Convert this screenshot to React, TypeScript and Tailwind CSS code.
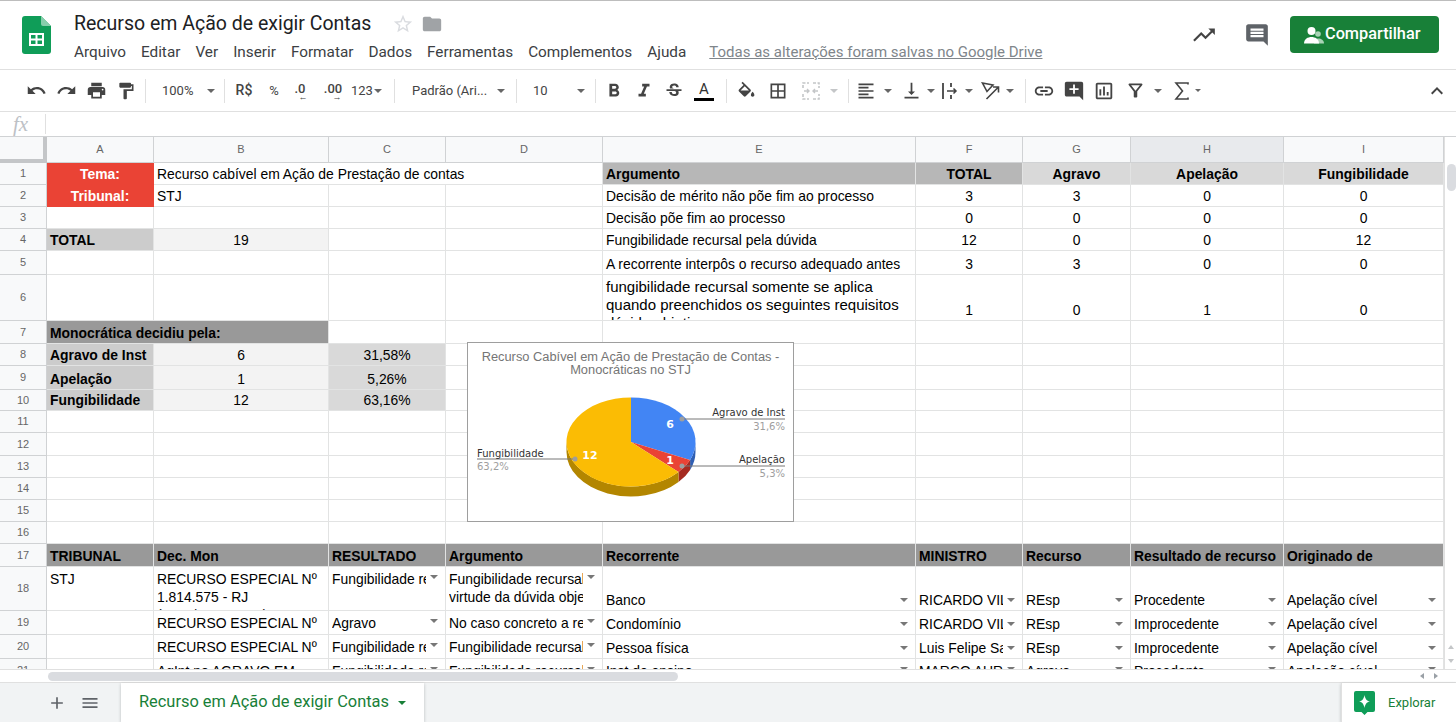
import React from 'react';
import {
  MdUndo,
  MdRedo,
  MdPrint,
  MdFormatPaint,
  MdFormatBold,
  MdFormatItalic,
  MdStrikethroughS,
  MdBorderAll,
  MdFormatAlignLeft,
  MdVerticalAlignBottom,
  MdInsertLink,
  MdAddComment,
  MdOutlineInsertChart,
  MdOutlineFilterAlt,
  MdExpandLess,
  MdTrendingUp,
  MdInsertComment,
  MdStarBorder,
  MdFolder,
  MdAdd,
  MdMenu,
} from 'react-icons/md';

const MENU = ['Arquivo', 'Editar', 'Ver', 'Inserir', 'Formatar', 'Dados', 'Ferramentas', 'Complementos', 'Ajuda'];
const COLS = ['A', 'B', 'C', 'D', 'E', 'F', 'G', 'H', 'I'];

interface CellData {
  t?: string;
  c?: string;
  drop?: boolean;
  top?: boolean;
  wrap?: boolean;
}

const center = 'justify-center text-center';
const bold = 'font-bold';
const head = 'bg-[#999999] font-bold border-[#999999]';
const empty: CellData = {};
const blanks = (n: number): CellData[] => Array.from({ length: n }, () => empty);
const nums = (a: string, b: string, c: string, d: string): CellData[] =>
  [a, b, c, d].map((t) => ({ t, c: center }));

const ROWS: CellData[][] = [
  [
    { t: 'Tema:', c: `${center} ${bold} bg-[#ea4335] text-white border-[#ea4335]` },
    { t: 'Recurso cabível em Ação de Prestação de contas', c: 'col-span-3' },
    { t: 'Argumento', c: 'bg-[#b7b7b7] font-bold' },
    { t: 'TOTAL', c: `${center} ${bold} bg-[#b7b7b7]` },
    { t: 'Agravo', c: `${center} ${bold} bg-[#d9d9d9]` },
    { t: 'Apelação', c: `${center} ${bold} bg-[#d9d9d9]` },
    { t: 'Fungibilidade', c: `${center} ${bold} bg-[#d9d9d9]` },
  ],
  [
    { t: 'Tribunal:', c: `${center} ${bold} bg-[#ea4335] text-white border-[#ea4335]` },
    { t: 'STJ' },
    ...blanks(2),
    { t: 'Decisão de mérito não põe fim ao processo' },
    ...nums('3', '3', '0', '0'),
  ],
  [...blanks(4), { t: 'Decisão põe fim ao processo' }, ...nums('0', '0', '0', '0')],
  [
    { t: 'TOTAL', c: 'bg-[#cccccc] font-bold' },
    { t: '19', c: `${center} bg-[#f3f3f3]` },
    ...blanks(2),
    { t: 'Fungibilidade recursal pela dúvida' },
    ...nums('12', '0', '0', '12'),
  ],
  [...blanks(4), { t: 'A recorrente interpôs o recurso adequado antes' }, ...nums('3', '3', '0', '0')],
  [
    ...blanks(4),
    {
      t: 'fungibilidade recursal somente se aplica quando preenchidos os seguintes requisitos dúvida objetiva',
      top: true,
      wrap: true,
      c: 'text-[15px]',
    },
    ...nums('1', '0', '1', '0'),
  ],
  [{ t: 'Monocrática decidiu pela:', c: `col-span-2 ${head}` }, ...blanks(7)],
  [
    { t: 'Agravo de Inst', c: 'bg-[#cccccc] font-bold' },
    { t: '6', c: `${center} bg-[#f3f3f3]` },
    { t: '31,58%', c: `${center} bg-[#d9d9d9]` },
    ...blanks(6),
  ],
  [
    { t: 'Apelação', c: 'bg-[#cccccc] font-bold' },
    { t: '1', c: `${center} bg-[#f3f3f3]` },
    { t: '5,26%', c: `${center} bg-[#d9d9d9]` },
    ...blanks(6),
  ],
  [
    { t: 'Fungibilidade', c: 'bg-[#cccccc] font-bold' },
    { t: '12', c: `${center} bg-[#f3f3f3]` },
    { t: '63,16%', c: `${center} bg-[#d9d9d9]` },
    ...blanks(6),
  ],
  blanks(9),
  blanks(9),
  blanks(9),
  blanks(9),
  blanks(9),
  blanks(9),
  ['TRIBUNAL', 'Dec. Mon', 'RESULTADO', 'Argumento', 'Recorrente', 'MINISTRO', 'Recurso', 'Resultado de recurso', 'Originado de'].map(
    (t) => ({ t, c: head }),
  ),
  [
    { t: 'STJ', top: true },
    { t: 'RECURSO ESPECIAL Nº 1.814.575 - RJ (2019/0138420-5)', top: true, wrap: true },
    { t: 'Fungibilidade recursal', top: true, drop: true },
    { t: 'Fungibilidade recursal em\nvirtude da dúvida objetiva', top: true, drop: true },
    { t: 'Banco', drop: true },
    { t: 'RICARDO VILLAS', drop: true },
    { t: 'REsp', drop: true },
    { t: 'Procedente', drop: true },
    { t: 'Apelação cível', drop: true },
  ],
  [
    empty,
    { t: 'RECURSO ESPECIAL Nº 1.606.575 - SP', top: true, wrap: true },
    { t: 'Agravo', top: true, drop: true },
    { t: 'No caso concreto a recorrente\ninterpôs o recurso adequado', top: true, drop: true },
    { t: 'Condomínio', drop: true },
    { t: 'RICARDO VILLAS', drop: true },
    { t: 'REsp', drop: true },
    { t: 'Improcedente', drop: true },
    { t: 'Apelação cível', drop: true },
  ],
  [
    empty,
    { t: 'RECURSO ESPECIAL Nº 1.616.205 - RS', top: true, wrap: true },
    { t: 'Fungibilidade recursal', top: true, drop: true },
    { t: 'Fungibilidade recursal em\nvirtude da dúvida objetiva', top: true, drop: true },
    { t: 'Pessoa física', drop: true },
    { t: 'Luis Felipe Salomão', drop: true },
    { t: 'REsp', drop: true },
    { t: 'Improcedente', drop: true },
    { t: 'Apelação cível', drop: true },
  ],
  [
    empty,
    { t: 'AgInt no AGRAVO EM', top: true },
    { t: 'Fungibilidade recursal', top: true, drop: true },
    { t: 'Fungibilidade recursal em', top: true, drop: true },
    { t: 'Inst de ensino', top: true, drop: true },
    { t: 'MARCO AURÉLIO', top: true, drop: true },
    { t: 'Agravo', top: true, drop: true },
    { t: 'Procedente', top: true, drop: true },
    { t: 'Apelação cível', top: true, drop: true },
  ],
];

function Caret({ className = 'border-t-[#666666]' }: { className?: string }) {
  return <span className={`inline-block h-0 w-0 shrink-0 border-x-[4px] border-t-[4px] border-x-transparent ${className}`} />;
}

function Sep() {
  return <div className="h-[24px] w-px shrink-0 bg-[#e0e0e0]" />;
}

function SheetsLogo() {
  return (
    <svg width="29" height="38" viewBox="0 0 29 38">
      <path d="M3 0H19L29 10V35a3 3 0 0 1-3 3H3a3 3 0 0 1-3-3V3a3 3 0 0 1 3-3z" fill="#0f9d58" />
      <path d="M19 0L29 10H21a2 2 0 0 1-2-2z" fill="#87ceac" />
      <path d="M7 17H22V30H7zM9 19V22.5H13.5V19zM15.5 19V22.5H20V19zM9 24.5V28H13.5V24.5zM15.5 24.5V28H20V24.5z" fill="#fff" fillRule="evenodd" />
    </svg>
  );
}

function FillIcon() {
  return (
    <svg width="21" height="21" viewBox="0 0 24 20" fill="#444">
      <path d="M16.56 8.94L7.62 0 6.21 1.41l2.38 2.38-5.15 5.15c-.59.59-.59 1.54 0 2.12l5.5 5.5c.29.29.68.44 1.06.44s.77-.15 1.06-.44l5.5-5.5c.59-.58.59-1.53 0-2.11zM5.21 10L10 5.21 14.79 10H5.21zM19 11.5s-2 2.17-2 3.5c0 1.1.9 2 2 2s2-.9 2-2c0-1.33-2-3.5-2-3.5z" />
    </svg>
  );
}

function MergeIcon() {
  return (
    <svg width="18" height="18" viewBox="0 0 18 18" fill="none" stroke="#c4c6c8" strokeWidth="1.6">
      <path d="M1 6V1H7M11 1H17V6M1 12V17H7M11 17H17V12" strokeDasharray="3 1.5" />
      <path d="M2 9H7M5 7L7 9 5 11M16 9H11M13 7L11 9 13 11" strokeWidth="1.4" />
    </svg>
  );
}

function WrapIcon() {
  return (
    <svg width="18" height="20" viewBox="0 0 18 20" fill="none" stroke="#444" strokeWidth="1.8">
      <path d="M2 2V18" />
      <path d="M10 2V6M10 14V18" />
      <path d="M6 10H15M12.5 7.5L15 10 12.5 12.5" strokeWidth="1.5" />
    </svg>
  );
}

function RotateIcon() {
  return (
    <svg width="20" height="20" viewBox="0 0 20 20" fill="none" stroke="#444" strokeWidth="1.6">
      <path d="M1.5 2L12 4 6 10.5Z" />
      <path d="M5.5 18L17 6.5M12 6H17.5V11.5" />
    </svg>
  );
}

function SigmaIcon() {
  return (
    <svg width="18" height="20" viewBox="0 0 18 20" fill="none" stroke="#444" strokeWidth="1.6">
      <path d="M15 3.5V2H3L9.5 10 3 18H15V16.5" />
    </svg>
  );
}

function ShareIcon() {
  return (
    <svg width="22" height="20" viewBox="0 0 22 20" fill="#fff">
      <circle cx="15" cy="9" r="2.8" fill="#a9d3b6" />
      <path d="M11 18.5C11 15 13 13.5 15.5 13.5S21 15 21 18.5z" fill="#a9d3b6" />
      <circle cx="8.5" cy="6" r="4" />
      <path d="M1 18.5C1 14 5 12 8.5 12S16 14 16 18.5z" />
    </svg>
  );
}

function ExploreIcon() {
  return (
    <svg width="21" height="24" viewBox="0 0 21 24">
      <path d="M2 0H19a2 2 0 0 1 2 2V19a2 2 0 0 1-2 2H13.5L10.5 24 7.5 21H2a2 2 0 0 1-2-2V2A2 2 0 0 1 2 0z" fill="#0f9d58" />
      <path d="M10.5 4C11.3 8 12.5 9.7 16 10.5 12.5 11.3 11.3 13 10.5 17 9.7 13 8.5 11.3 5 10.5 8.5 9.7 9.7 8 10.5 4z" fill="#fff" />
    </svg>
  );
}

function Btn({ children, className = 'w-[30px]' }: { children: React.ReactNode; className?: string }) {
  return <div className={`flex h-[30px] shrink-0 items-center justify-center text-[#444444] ${className}`}>{children}</div>;
}

function Toolbar() {
  return (
    <div className="flex h-[43px] items-center border-y border-[#e0e0e0] pl-[21px] font-['Roboto',sans-serif] text-[13px] text-[#444444]">
      <Btn><MdUndo size={21} /></Btn>
      <Btn><MdRedo size={21} /></Btn>
      <Btn><MdPrint size={21} /></Btn>
      <Btn><MdFormatPaint size={20} /></Btn>
      <div className="ml-[4px]"><Sep /></div>
      <div className="flex w-[78px] shrink-0 items-center pl-[16px]">
        <span className="w-[45px]">100%</span>
        <Caret />
      </div>
      <Sep />
      <div className="flex w-[38px] justify-center text-[14px] font-medium">R$</div>
      <div className="flex w-[22px] justify-center">%</div>
      <div className="flex w-[30px] flex-col items-center leading-[13px]">
        <span className="font-medium">.0</span>
        <span className="-mt-[1px] pl-[6px] text-[9px] leading-[6px]">←</span>
      </div>
      <div className="flex w-[36px] flex-col items-center leading-[13px]">
        <span className="font-medium">.00</span>
        <span className="-mt-[1px] pl-[8px] text-[9px] leading-[6px]">→</span>
      </div>
      <div className="flex w-[43px] shrink-0 items-center gap-[1px]">
        <span>123</span>
        <Caret />
      </div>
      <Sep />
      <div className="flex w-[121px] shrink-0 items-center pl-[17px]">
        <span className="w-[85px]">Padrão (Ari...</span>
        <Caret />
      </div>
      <Sep />
      <div className="flex w-[78px] shrink-0 items-center pl-[16px]">
        <span className="w-[44px]">10</span>
        <Caret />
      </div>
      <Sep />
      <div className="ml-[3px] flex">
        <Btn><MdFormatBold size={22} /></Btn>
        <Btn><MdFormatItalic size={22} /></Btn>
        <Btn><MdStrikethroughS size={20} /></Btn>
        <div className="flex h-[30px] w-[30px] flex-col items-center justify-center text-[15px] leading-[18px] text-[#333333]">
          <span>A</span>
          <div className="h-[3px] w-[20px] bg-black" />
        </div>
      </div>
      <div className="ml-[7px]"><Sep /></div>
      <Btn className="ml-[4px] w-[30px]"><FillIcon /></Btn>
      <Btn className="ml-[2px] w-[30px]"><MdBorderAll size={20} /></Btn>
      <Btn className="ml-[3px] w-[30px]"><MergeIcon /></Btn>
      <Btn className="w-[16px]"><Caret className="border-t-[#c4c6c8]" /></Btn>
      <div className="ml-[6px]"><Sep /></div>
      <Btn className="ml-[5px] w-[24px]"><MdFormatAlignLeft size={20} /></Btn>
      <Btn className="ml-[3px] w-[14px]"><Caret /></Btn>
      <Btn className="ml-[4px] w-[24px]"><MdVerticalAlignBottom size={21} /></Btn>
      <Btn className="ml-[1px] w-[14px]"><Caret /></Btn>
      <Btn className="w-[24px]"><WrapIcon /></Btn>
      <Btn className="w-[14px]"><Caret /></Btn>
      <Btn className="ml-[1px] w-[28px]"><RotateIcon /></Btn>
      <Btn className="w-[10px]"><Caret /></Btn>
      <div className="ml-[10px]"><Sep /></div>
      <Btn className="ml-[3px] w-[30px]"><MdInsertLink size={22} /></Btn>
      <Btn className="w-[30px]"><MdAddComment size={22} /></Btn>
      <Btn className="w-[30px]"><MdOutlineInsertChart size={22} /></Btn>
      <Btn className="ml-[1px] w-[30px]"><MdOutlineFilterAlt size={21} /></Btn>
      <Btn className="w-[16px]"><Caret /></Btn>
      <Btn className="ml-[1px] w-[30px]"><SigmaIcon /></Btn>
      <Btn className="-ml-[3px] w-[8px]"><span className="h-0 w-0 border-x-[3px] border-t-[3px] border-x-transparent border-t-[#666666]" /></Btn>
      <div className="ml-auto mr-[4px]"><Btn><MdExpandLess size={24} /></Btn></div>
    </div>
  );
}

function Cell({ cell }: { cell: CellData }) {
  const align = cell.top ? 'items-start pt-[3px]' : 'items-end pb-[1px]';
  return (
    <div className={`flex min-h-0 min-w-0 overflow-hidden border-r border-b border-[#e2e3e3] px-[3px] text-[13.9px] leading-[18px] text-black ${align} ${cell.c ?? ''}`}>
      {cell.t && (
        <span className={`min-w-0 ${cell.drop ? 'flex-1 overflow-hidden' : ''} ${cell.wrap ? '' : 'whitespace-pre'}`}>
          {cell.t}
        </span>
      )}
      {cell.drop && (
        <span className={`ml-[4px] mr-[4px] shrink-0 ${cell.top ? 'mt-[5px]' : 'mb-[7px]'} flex`}>
          <Caret className="border-t-[#777777]" />
        </span>
      )}
    </div>
  );
}

function Sheet() {
  return (
    <div className="relative h-[532px] w-[1444px] shrink-0 overflow-hidden">
      <div className="grid grid-cols-[47px_107px_175px_117px_157px_313px_107px_108px_153px_160px] grid-rows-[26px_22px_22px_22px_22px_24px_46px_23px_22px_24px_21px_22px_23px_22px_22px_22px_22px_23px_44px_24px_24px_24px] font-['Liberation_Sans',Arial,sans-serif]">
        <div className="border-r-[4px] border-b-[4px] border-[#c4c6c8] bg-[#f8f9fa]" />
        {COLS.map((col) => (
          <div
            key={col}
            className={`flex items-center justify-center border-r border-b border-[#d0d2d4] text-[11px] text-[#666666] ${col === 'H' ? 'bg-[#e8eaed]' : 'bg-[#f8f9fa]'}`}
          >
            {col}
          </div>
        ))}
        {ROWS.map((row, i) => (
          <React.Fragment key={i}>
            <div className="flex items-center justify-center border-r border-b border-[#d0d2d4] bg-[#f8f9fa] text-[11px] text-[#666666]">
              {i + 1}
            </div>
            {row.map((cell, j) => (
              <Cell key={j} cell={cell} />
            ))}
          </React.Fragment>
        ))}
      </div>
      <PieChart />
    </div>
  );
}

// ponto na elipse do topo da pizza, angulo em graus a partir do topo
const CX = 163;
const CY = 99;
const RX = 64.5;
const RY = 44.5;
const DEPTH = 10;
const pt = (a: number, dy = 0) => {
  const r = (a * Math.PI) / 180;
  return `${(CX + RX * Math.sin(r)).toFixed(1)} ${(CY - RY * Math.cos(r) + dy).toFixed(1)}`;
};
const slice = (a: number, b: number) =>
  `M${CX} ${CY}L${pt(a)}A${RX} ${RY} 0 ${b - a > 180 ? 1 : 0} 1 ${pt(b)}Z`;
const side = (a: number, b: number) =>
  `M${pt(a)}A${RX} ${RY} 0 0 1 ${pt(b)}L${pt(b, DEPTH)}A${RX} ${RY} 0 0 0 ${pt(a, DEPTH)}Z`;

function PieChart() {
  return (
    <div className="absolute left-[467px] top-[205px] h-[180px] w-[327px] border border-[#9e9e9e] bg-white">
      <div className="pt-[7px] text-center font-['Liberation_Sans',Arial,sans-serif] text-[12.85px] leading-[13px] text-[#757575]">
        <p>Recurso Cabível em Ação de Prestação de Contas -</p>
        <p>Monocráticas no STJ</p>
      </div>
      <svg className="absolute left-0 top-0" width="325" height="178" viewBox="0 0 325 178" fontFamily="'DejaVu Sans', sans-serif" fontSize="10">
        <path d={side(90, 113.7)} fill="#2f5fb3" />
        <path d={side(113.7, 132.6)} fill="#a52a20" />
        <path d={side(132.6, 270)} fill="#b38600" />
        <path d={slice(0, 113.7)} fill="#4285f4" />
        <path d={slice(113.7, 132.6)} fill="#ea4335" />
        <path d={slice(132.6, 360)} fill="#fbbc04" />
        <g stroke="#777777" strokeWidth="1">
          <path d="M214 76H317" />
          <path d="M214 123H317" />
          <path d="M9 116H107" />
        </g>
        <g fill="#9e9e9e">
          <circle cx="214" cy="76" r="2.5" />
          <circle cx="214" cy="123" r="2.5" />
          <circle cx="107" cy="116" r="2.5" />
        </g>
        <g fill="#333333">
          <text x="317" y="73" textAnchor="end">Agravo de Inst</text>
          <text x="317" y="120" textAnchor="end">Apelação</text>
          <text x="9" y="114">Fungibilidade</text>
        </g>
        <g fill="#9e9e9e">
          <text x="317" y="87" textAnchor="end">31,6%</text>
          <text x="317" y="134" textAnchor="end">5,3%</text>
          <text x="9" y="127">63,2%</text>
        </g>
        <g fill="#ffffff" fontWeight="700" fontSize="11" textAnchor="middle">
          <text x="202" y="85">6</text>
          <text x="202" y="121">1</text>
          <text x="122" y="116">12</text>
        </g>
      </svg>
    </div>
  );
}

function VerticalScroll() {
  return (
    <div className="flex flex-1 flex-col border-l border-[#e0e0e0] pt-[27px]">
      <div className="ml-[2px] h-[27px] w-[9px] rounded-[5px] bg-[#dadce0]" />
      <div className="mt-auto mb-[6px] flex flex-col items-center gap-[10px]">
        <span className="h-0 w-0 border-x-[3px] border-b-[4px] border-x-transparent border-b-[#c4c6c8]" />
        <span className="h-0 w-0 border-x-[3px] border-t-[4px] border-x-transparent border-t-[#c4c6c8]" />
      </div>
    </div>
  );
}

export default function App() {
  return (
    <div className="flex h-[722px] w-[1456px] flex-col overflow-hidden bg-white font-['Roboto',sans-serif]">
      <header className="flex h-[69px] items-start border-t border-[#bdbdbd] pl-[22px]">
        <div className="mt-[15px]"><SheetsLogo /></div>
        <div className="ml-[23px] flex flex-col pt-[9px]">
          <div className="flex h-[28px] items-center">
            <h1 className="text-[19.5px] font-normal leading-[28px] text-[#202124]">Recurso em Ação de exigir Contas</h1>
            <MdStarBorder size={22} className="ml-[21px] text-[#dadce0]" />
            <MdFolder size={22} className="ml-[7px] text-[#a0a3a6]" />
          </div>
          <nav className="mt-[4px] flex items-center gap-[15px] text-[15.32px] leading-[20px] text-[#3c4043]">
            {MENU.map((m) => (
              <span key={m}>{m}</span>
            ))}
            <span className="ml-[8px] text-[15px] text-[#80868b] underline">Todas as alterações foram salvas no Google Drive</span>
          </nav>
        </div>
        <div className="ml-auto mr-[17px] mt-[15px] flex items-center">
          <MdTrendingUp size={26} className="text-[#444444]" />
          <MdInsertComment size={26} className="ml-[27px] text-[#5f6368]" />
          <button className="ml-[20px] flex h-[37px] w-[149px] items-center rounded-[4px] bg-[#188038] pl-[13px] text-[16.3px] font-medium text-white">
            <ShareIcon />
            Compartilhar
          </button>
        </div>
      </header>
      <Toolbar />
      <div className="flex h-[25px] items-center border-b border-[#d0d2d4]">
        <span className="ml-[13px] font-['Liberation_Serif',serif] text-[21px] italic leading-[24px] text-[#bdc1c6]">fx</span>
        <div className="ml-[17px] h-[20px] w-px bg-[#e0e0e0]" />
      </div>
      <div className="flex h-[532px]">
        <Sheet />
        <VerticalScroll />
      </div>
      <div className="flex h-[13px] items-center border-t border-[#e0e0e0] pl-[48px]">
        <div className="h-[9px] w-[630px] rounded-[5px] bg-[#dadce0]" />
        <div className="ml-auto mr-[18px] flex gap-[10px]">
          <span className="h-0 w-0 border-y-[3px] border-r-[4px] border-y-transparent border-r-[#9aa0a6]" />
          <span className="h-0 w-0 border-y-[3px] border-l-[4px] border-y-transparent border-l-[#9aa0a6]" />
        </div>
      </div>
      <footer className="flex h-[40px] items-stretch border-t border-[#e0e0e0] bg-[#f1f3f4]">
        <div className="flex w-[121px] items-center pl-[47px] text-[#5f6368]">
          <MdAdd size={20} />
          <MdMenu size={20} className="ml-[13px]" />
        </div>
        <div className="flex w-[303px] items-center bg-white pl-[18px] text-[16.4px] text-[#188038] shadow-[0_1px_3px_rgba(60,64,67,0.3)]">
          <span>Recurso em Ação de exigir Contas</span>
          <span className="ml-[9px] flex"><Caret className="border-t-[#188038]" /></span>
        </div>
        <div className="ml-auto flex w-[115px] items-center border-l border-[#e0e0e0] bg-white pl-[12px] text-[13px] text-[#188038] shadow-[0_1px_3px_rgba(60,64,67,0.3)]">
          <ExploreIcon />
          <span className="ml-[13px]">Explorar</span>
        </div>
      </footer>
    </div>
  );
}
